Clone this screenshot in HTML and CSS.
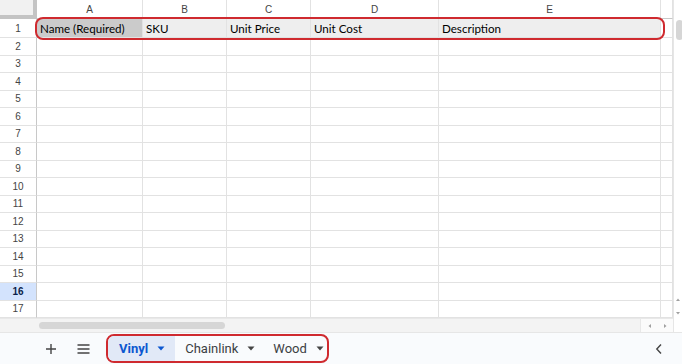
FILE: index.html
```html
<!DOCTYPE html>
<html>
<head>
<meta charset="utf-8">
<link rel="stylesheet" href="styles.css">
</head>
<body>
<div class="sheet">
  <div class="main">
    <div class="left">
      <div class="grid">
        <div class="corner"></div>
        <div class="colh">A</div><div class="colh">B</div><div class="colh">C</div><div class="colh">D</div><div class="colh">E</div><div class="colh"></div>
        <div class="rowh">1</div>
        <div class="cell r1 sel">Name (Required)</div><div class="cell r1">SKU</div><div class="cell r1">Unit Price</div><div class="cell r1">Unit Cost</div><div class="cell r1">Description</div><div class="cell"></div>
        <div class="rowh">2</div><div class="cell"></div><div class="cell"></div><div class="cell"></div><div class="cell"></div><div class="cell"></div><div class="cell"></div>
        <div class="rowh">3</div><div class="cell"></div><div class="cell"></div><div class="cell"></div><div class="cell"></div><div class="cell"></div><div class="cell"></div>
        <div class="rowh">4</div><div class="cell"></div><div class="cell"></div><div class="cell"></div><div class="cell"></div><div class="cell"></div><div class="cell"></div>
        <div class="rowh">5</div><div class="cell"></div><div class="cell"></div><div class="cell"></div><div class="cell"></div><div class="cell"></div><div class="cell"></div>
        <div class="rowh">6</div><div class="cell"></div><div class="cell"></div><div class="cell"></div><div class="cell"></div><div class="cell"></div><div class="cell"></div>
        <div class="rowh">7</div><div class="cell"></div><div class="cell"></div><div class="cell"></div><div class="cell"></div><div class="cell"></div><div class="cell"></div>
        <div class="rowh">8</div><div class="cell"></div><div class="cell"></div><div class="cell"></div><div class="cell"></div><div class="cell"></div><div class="cell"></div>
        <div class="rowh">9</div><div class="cell"></div><div class="cell"></div><div class="cell"></div><div class="cell"></div><div class="cell"></div><div class="cell"></div>
        <div class="rowh">10</div><div class="cell"></div><div class="cell"></div><div class="cell"></div><div class="cell"></div><div class="cell"></div><div class="cell"></div>
        <div class="rowh">11</div><div class="cell"></div><div class="cell"></div><div class="cell"></div><div class="cell"></div><div class="cell"></div><div class="cell"></div>
        <div class="rowh">12</div><div class="cell"></div><div class="cell"></div><div class="cell"></div><div class="cell"></div><div class="cell"></div><div class="cell"></div>
        <div class="rowh">13</div><div class="cell"></div><div class="cell"></div><div class="cell"></div><div class="cell"></div><div class="cell"></div><div class="cell"></div>
        <div class="rowh">14</div><div class="cell"></div><div class="cell"></div><div class="cell"></div><div class="cell"></div><div class="cell"></div><div class="cell"></div>
        <div class="rowh">15</div><div class="cell"></div><div class="cell"></div><div class="cell"></div><div class="cell"></div><div class="cell"></div><div class="cell"></div>
        <div class="rowh active">16</div><div class="cell"></div><div class="cell"></div><div class="cell"></div><div class="cell"></div><div class="cell"></div><div class="cell"></div>
        <div class="rowh">17</div><div class="cell"></div><div class="cell"></div><div class="cell"></div><div class="cell"></div><div class="cell"></div><div class="cell"></div>
        <div class="row-outline"></div>
      </div>
      <div class="hscroll">
        <div class="hscroll-gutter"></div>
        <div class="hscroll-track"><div class="hthumb"></div></div>
        <div class="harrows">
          <svg width="6" height="6" viewBox="0 0 6 6"><path d="M4 1 L1.5 3 L4 5 Z" fill="#a0a0a0"/></svg>
          <svg width="6" height="6" viewBox="0 0 6 6"><path d="M2 1 L4.5 3 L2 5 Z" fill="#a0a0a0"/></svg>
        </div>
      </div>
    </div>
    <div class="vscroll">
      <div class="vthumb"></div>
      <div class="varrows">
        <svg width="6" height="6" viewBox="0 0 6 6"><path d="M1 4 L3 1.5 L5 4 Z" fill="#a0a0a0"/></svg>
        <svg width="6" height="6" viewBox="0 0 6 6"><path d="M1 2 L3 4.5 L5 2 Z" fill="#a0a0a0"/></svg>
      </div>
    </div>
  </div>
  <div class="tabbar">
    <div class="tb-icon">
      <svg width="12" height="12" viewBox="0 0 12 12"><path d="M6 1 V11 M1 6 H11" stroke="#444" stroke-width="1.4" fill="none"/></svg>
    </div>
    <div class="tb-icon">
      <svg width="13" height="10" viewBox="0 0 13 10"><path d="M0.5 1 H12.5 M0.5 5 H12.5 M0.5 9 H12.5" stroke="#444" stroke-width="1.3" fill="none"/></svg>
    </div>
    <div class="tabs">
      <div class="tab tab-active"><span>Vinyl</span><svg class="caret" width="8" height="5" viewBox="0 0 8 5"><path d="M0.5 0.5 H7.5 L4 4.5 Z" fill="#0b57d0"/></svg></div>
      <div class="tab"><span>Chainlink</span><svg class="caret" width="8" height="5" viewBox="0 0 8 5"><path d="M0.5 0.5 H7.5 L4 4.5 Z" fill="#444"/></svg></div>
      <div class="tab tab-last"><span>Wood</span><svg class="caret" width="8" height="5" viewBox="0 0 8 5"><path d="M0.5 0.5 H7.5 L4 4.5 Z" fill="#444"/></svg></div>
    </div>
    <div class="spacer"></div>
    <div class="chev">
      <svg width="8" height="12" viewBox="0 0 8 12"><path d="M6 1.5 L1.8 6 L6 10.5" stroke="#444" stroke-width="1.4" fill="none"/></svg>
    </div>
  </div>
</div>
</body>
</html>
```

FILE: styles.css
```css
* { box-sizing: border-box; }
html, body {
  margin: 0;
  padding: 0;
  width: 682px;
  height: 364px;
  overflow: hidden;
  background: #ffffff;
  font-family: "Liberation Sans", Arial, sans-serif;
}
.sheet {
  display: flex;
  flex-direction: column;
  width: 682px;
  height: 364px;
}
.main {
  display: flex;
  height: 332px;
}
.left {
  display: flex;
  flex-direction: column;
  width: 673px;
}
.grid {
  position: relative;
  display: grid;
  grid-template-columns: 37px 106px 84px 84px 128px 222px 12px;
  grid-template-rows: 19px 19px repeat(16, 17.5px);
  height: 318px;
}
.grid > div {
  border-right: 1px solid #e2e2e2;
  border-bottom: 1px solid #e2e2e2;
}
.grid > .corner {
  background: #f1f1f1;
  border-right: 4px solid #c4c4c4;
  border-bottom: 4px solid #c4c4c4;
}
.grid > .colh {
  font-size: 10px;
  color: #444;
  display: flex;
  align-items: center;
  justify-content: center;
  border-bottom: 1px solid #c8c8c8;
  padding-top: 1px;
}
.grid > .rowh {
  font-size: 10px;
  color: #444;
  display: flex;
  align-items: center;
  justify-content: center;
  border-right: 1px solid #c8c8c8;
}
.grid > .rowh.active {
  background: #d3e3fd;
  color: #0b1f4a;
  font-weight: bold;
}
.grid > .cell.r1 {
  background: #eeeeee;
  font-family: Lato, "Liberation Sans", sans-serif;
  font-size: 11.6px;
  color: #000;
  display: flex;
  align-items: center;
  padding-left: 3px;
  padding-top: 1px;
  white-space: nowrap;
}
.grid > .cell.r1.sel {
  background: #cbcbcb;
}
.grid > .row-outline {
  position: absolute;
  left: 35px;
  top: 17px;
  width: 630px;
  height: 23px;
  border: 2px solid #cf2a2f;
  border-radius: 8px;
}
.hscroll {
  display: flex;
  height: 14px;
  background: #ffffff;
  border-top: 1px solid #e8e8e8;
}
.hscroll-gutter {
  width: 37px;
  background: #f3f3f3;
}
.hscroll-track {
  flex: 1;
  display: flex;
  align-items: center;
  background: #f3f3f3;
  padding-left: 2px;
}
.hthumb {
  width: 186px;
  height: 7px;
  border-radius: 4px;
  background: #d6d6d6;
}
.harrows {
  display: flex;
  align-items: center;
  gap: 9px;
  padding: 0 5px 0 6px;
  border-left: 1px solid #e8e8e8;
  background: #fbfbfb;
}
.vscroll {
  width: 9px;
  display: flex;
  flex-direction: column;
  align-items: center;
  border-left: 1px solid #e6e6e6;
  padding-top: 20px;
  padding-bottom: 16px;
}
.vthumb {
  width: 7px;
  height: 20px;
  border-radius: 4px;
  background: #d6d6d6;
  margin-left: 2px;
}
.varrows {
  margin-top: auto;
  display: flex;
  flex-direction: column;
  gap: 7px;
}
.tabbar {
  display: flex;
  align-items: center;
  height: 32px;
  background: #f9fbfd;
  border-top: 1px solid #e6e6e6;
  font-family: Roboto, "Liberation Sans", sans-serif;
}
.tb-icon {
  width: 33px;
  display: flex;
  justify-content: center;
  align-items: center;
}
.tb-icon:first-child {
  margin-left: 34px;
}
.tabs {
  display: flex;
  align-items: stretch;
  height: 29px;
  margin-left: 6px;
  border: 2px solid #cf2a2f;
  border-radius: 8px;
  overflow: hidden;
}
.tab {
  display: flex;
  align-items: center;
  font-size: 13px;
  font-weight: 400;
  color: #3c4043;
  padding: 0 8px 0 10px;
}
.tab span {
  margin-right: 9px;
}
.tab-active {
  background: #e1e9f7;
  color: #0b57d0;
  font-weight: 700;
  padding-left: 11px;
  padding-right: 10px;
}
.tab-last {
  padding-right: 3px;
}
.caret {
  display: block;
}
.spacer {
  flex: 1;
}
.chev {
  width: 20px;
  margin-right: 13px;
  display: flex;
  justify-content: center;
}
```
